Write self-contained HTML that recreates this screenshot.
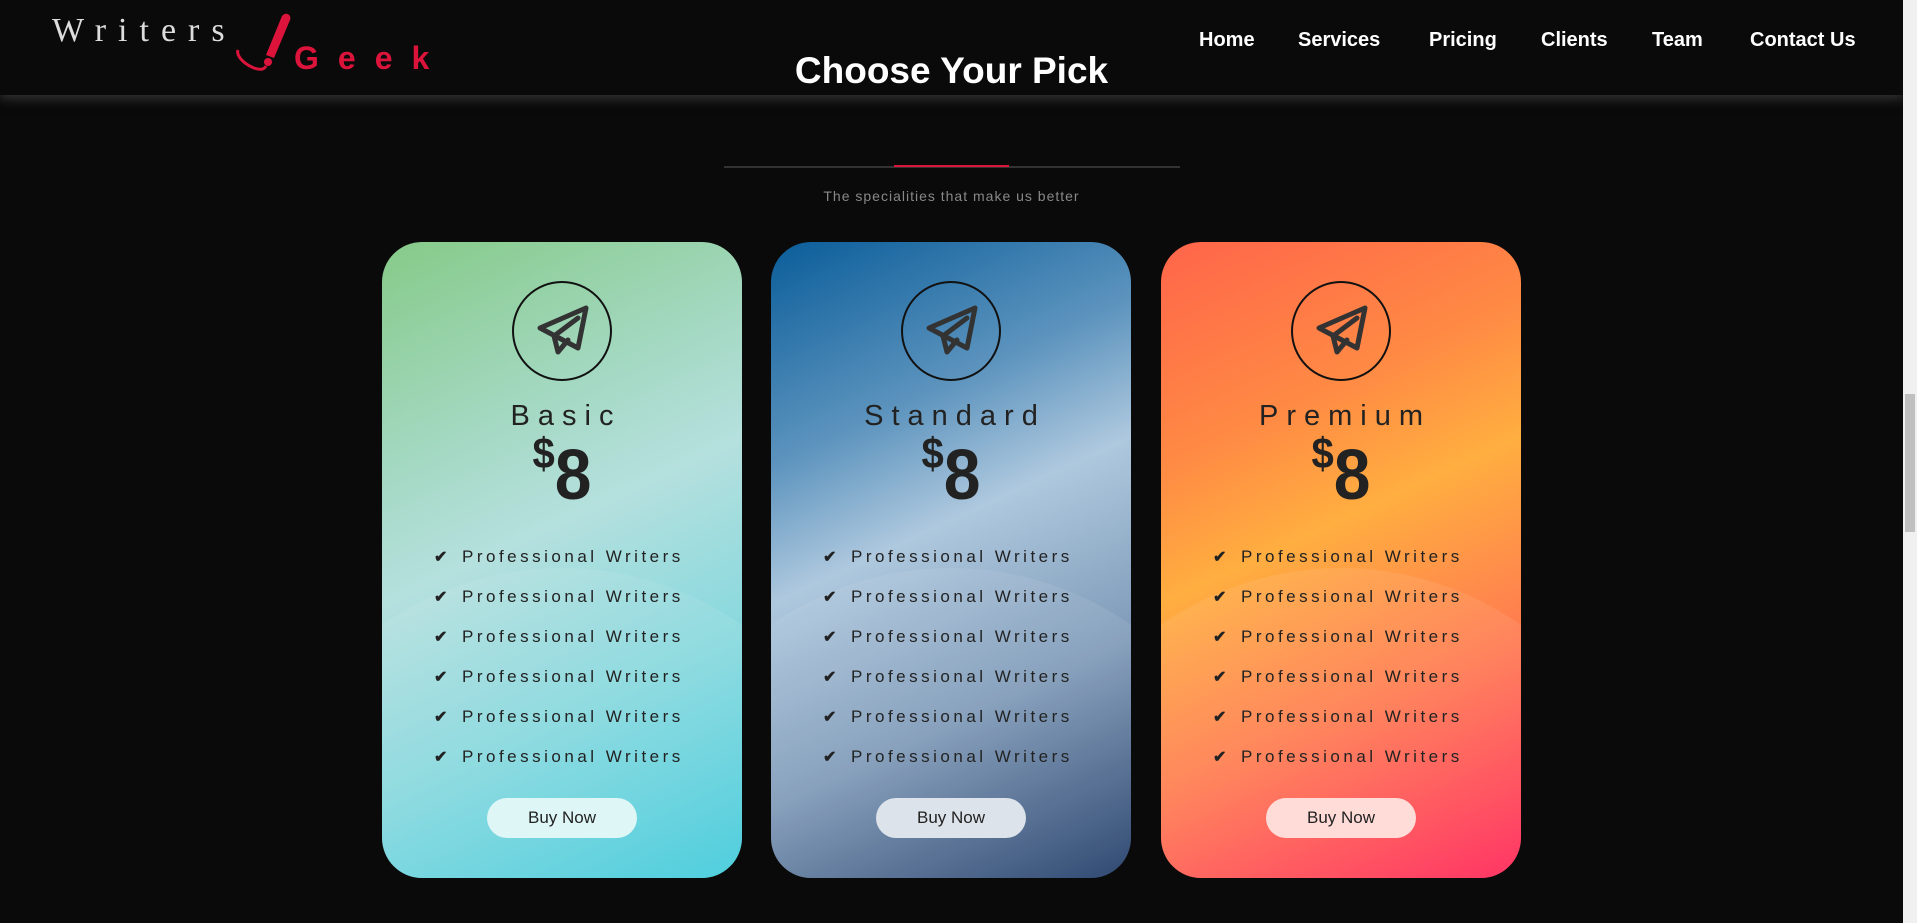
<!DOCTYPE html>
<html><head><meta charset="utf-8"><style>
*{margin:0;padding:0;box-sizing:border-box}
body{width:1917px;height:923px;background:#0a0a0a;font-family:"Liberation Sans",sans-serif;overflow:hidden;position:relative;color:#fff}
.hdr{position:absolute;left:0;top:0;width:1903px;height:95px;background:#0a0a0a;box-shadow:0 4px 10px rgba(60,60,60,.8)}
.logo1{position:absolute;left:52px;top:12px;font-family:"Liberation Serif",serif;font-size:34px;letter-spacing:12px;color:#ddd}
.logo2{position:absolute;left:294px;top:40px;font-size:32px;letter-spacing:19px;color:#dc143c;font-weight:bold}
.nav{position:absolute;top:29px;font-size:20px;font-weight:bold;color:#fff}
h1{position:absolute;left:0;width:1903px;text-align:center;top:50px;font-size:37px;font-weight:bold;color:#fff}
.line{position:absolute;left:724px;top:166px;width:456px;height:2px;background:#333}
.red{position:absolute;left:894px;top:165px;width:115px;height:2px;background:#dc143c}
.sub{position:absolute;left:0;width:1903px;text-align:center;top:188px;font-size:14px;letter-spacing:1px;color:#888}
.card{position:absolute;top:242px;width:360px;height:636px;border-radius:40px;overflow:hidden;color:#222;text-align:center}
.card:after{content:"";position:absolute;left:-150px;top:326px;width:660px;height:700px;border-radius:50%;background:rgba(255,255,255,.08)}
.c1{left:382px;background:linear-gradient(155deg,#86ca88 0%,#a5d9c4 30%,#b5e0de 45%,#86d8de 70%,#40cbdc 100%)}
.c2{left:771px;background:linear-gradient(155deg,#0a5d9a 0%,#5d94be 28%,#aec8de 45%,#7f9ab8 70%,#1f3a66 100%)}
.c3{left:1161px;background:linear-gradient(155deg,#ff654a 0%,#ff8a44 28%,#ffae40 45%,#ff7a50 70%,#ff2458 100%)}
.circ{position:absolute;left:130px;top:39px;width:100px;height:100px;border:2px solid #111;border-radius:50%;z-index:1}
.circ svg{position:absolute;left:18px;top:17px}
.tt{position:absolute;left:0;width:100%;top:158px;font-size:29px;letter-spacing:8px;padding-left:8px;z-index:1}
.pr{position:absolute;left:0;width:100%;top:194px;z-index:1;font-size:66px;font-weight:bold;transform:scaleY(1.08)}
.pr sup{font-size:40px;vertical-align:top;position:relative;top:-2px}
ul{position:absolute;left:52px;top:303px;list-style:none;z-index:1;text-align:left}
li{height:40px;font-size:17px;letter-spacing:3.5px;line-height:24px}
li b{display:inline-block;width:28px;font-size:16px}
.btn{position:absolute;left:105px;top:556px;width:150px;height:40px;border-radius:20px;line-height:40px;font-size:17px;z-index:1;color:#222}
.sb{position:absolute;right:0;top:0;width:14px;height:923px;background:#f0f0f0}
.th{position:absolute;right:2px;top:394px;width:10px;height:138px;background:#c0c0c0}
</style></head><body>
<div class="hdr">
<div class="logo1">Writers</div>
<svg style="position:absolute;left:232px;top:10px" width="70" height="68" viewBox="0 0 70 68"><path d="M50 6c4-5 10-1 8 4L42 48l-8-3z" fill="#dc143c"/><path d="M6 40c-2 6 6 14 16 18 6 2 10 2 12-2" stroke="#dc143c" stroke-width="3" fill="none"/><circle cx="36" cy="52" r="4" fill="#dc143c"/></svg>
<div class="logo2">Geek</div>
<div class="nav" style="left:1199px">Home</div>
<div class="nav" style="left:1298px">Services</div>
<div class="nav" style="left:1429px">Pricing</div>
<div class="nav" style="left:1541px">Clients</div>
<div class="nav" style="left:1652px">Team</div>
<div class="nav" style="left:1750px">Contact Us</div>
</div>
<h1>Choose Your Pick</h1>
<div class="line"></div><div class="red"></div>
<div class="sub">The specialities that make us better</div>

<div class="card c1"><div class="circ"><svg width="62" height="62" viewBox="0 0 62 62"><path d="M8 28L54 8 46 48zM22 36l4 16 10-12M22 36L46 18" stroke="#333" stroke-width="5" fill="none" stroke-linejoin="round" stroke-linecap="round"/></svg></div>
<div class="tt">Basic</div><div class="pr"><sup>$</sup>8</div>
<ul><li><b>✔</b>Professional Writers</li><li><b>✔</b>Professional Writers</li><li><b>✔</b>Professional Writers</li><li><b>✔</b>Professional Writers</li><li><b>✔</b>Professional Writers</li><li><b>✔</b>Professional Writers</li></ul>
<div class="btn" style="background:#dff6f6">Buy Now</div></div>

<div class="card c2"><div class="circ"><svg width="62" height="62" viewBox="0 0 62 62"><path d="M8 28L54 8 46 48zM22 36l4 16 10-12M22 36L46 18" stroke="#333" stroke-width="5" fill="none" stroke-linejoin="round" stroke-linecap="round"/></svg></div>
<div class="tt">Standard</div><div class="pr"><sup>$</sup>8</div>
<ul><li><b>✔</b>Professional Writers</li><li><b>✔</b>Professional Writers</li><li><b>✔</b>Professional Writers</li><li><b>✔</b>Professional Writers</li><li><b>✔</b>Professional Writers</li><li><b>✔</b>Professional Writers</li></ul>
<div class="btn" style="background:#dde3ea">Buy Now</div></div>

<div class="card c3"><div class="circ"><svg width="62" height="62" viewBox="0 0 62 62"><path d="M8 28L54 8 46 48zM22 36l4 16 10-12M22 36L46 18" stroke="#333" stroke-width="5" fill="none" stroke-linejoin="round" stroke-linecap="round"/></svg></div>
<div class="tt">Premium</div><div class="pr"><sup>$</sup>8</div>
<ul><li><b>✔</b>Professional Writers</li><li><b>✔</b>Professional Writers</li><li><b>✔</b>Professional Writers</li><li><b>✔</b>Professional Writers</li><li><b>✔</b>Professional Writers</li><li><b>✔</b>Professional Writers</li></ul>
<div class="btn" style="background:#ffdcd8">Buy Now</div></div>

<div class="sb"><div class="th"></div></div>
</body></html>
